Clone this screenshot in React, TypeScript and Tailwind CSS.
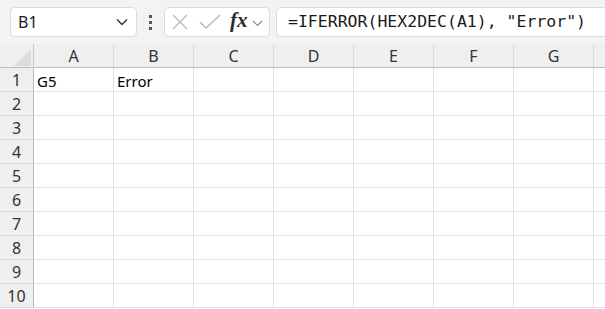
import React from "react";

const cols = ["A", "B", "C", "D", "E", "F", "G"];
const rows = [1, 2, 3, 4, 5, 6, 7, 8, 9, 10];

export default function App() {
  return (
    <div className="w-[605px] h-[309px] overflow-hidden bg-white" style={{ fontFamily: '"Noto Sans", "Open Sans", sans-serif' }}>
      {/* top bar */}
      <div className="h-[44px] bg-[#f3f3f3] flex items-start pt-[7px]">
        <div className="ml-[10px] w-[127px] h-[30px] bg-white border border-[#dcdcdc] rounded-[5px] flex items-center pl-[7px] pr-[8px]">
          <span className="text-[16px] text-[#1a1a1a] leading-none">B1</span>
          <svg className="ml-auto" width="12" height="8" viewBox="0 0 12 8">
            <path d="M1 1.5 L6 6.5 L11 1.5" fill="none" stroke="#333" strokeWidth="1.4" />
          </svg>
        </div>
        <div className="w-[27px] h-[30px] flex flex-col items-center justify-center gap-[3px]">
          <div className="w-[3px] h-[3px] bg-[#555]" />
          <div className="w-[3px] h-[3px] bg-[#555]" />
          <div className="w-[3px] h-[3px] bg-[#555]" />
        </div>
        <div className="w-[106px] h-[30px] bg-white border border-[#dcdcdc] rounded-[5px] flex items-center pl-[7px]">
          <svg width="16" height="16" viewBox="0 0 16 16">
            <path d="M1 1 L15 15 M15 1 L1 15" stroke="#b8b8b8" strokeWidth="1.3" fill="none" />
          </svg>
          <svg className="ml-[11px]" width="22" height="16" viewBox="0 0 22 16">
            <path d="M1 8 L7 14 L21 1" stroke="#b8b8b8" strokeWidth="1.3" fill="none" />
          </svg>
          <span className="ml-[9px] text-[21px] leading-none italic font-bold text-[#2b2b2b] -mt-[3px]" style={{ fontFamily: '"Liberation Serif", serif' }}>fx</span>
          <svg className="ml-[4px] mt-[2px]" width="11" height="7" viewBox="0 0 11 7">
            <path d="M1 1 L5.5 5.5 L10 1" fill="none" stroke="#8a8a8a" strokeWidth="1.2" />
          </svg>
        </div>
        <div className="ml-[6px] flex-1 h-[30px] bg-white border border-[#dcdcdc] border-r-0 rounded-l-[5px] flex items-center pl-[11px]">
          <span className="text-[16.5px] text-[#1a1a1a] leading-none whitespace-pre" style={{ fontFamily: '"DejaVu Sans Mono", monospace' }}>=IFERROR(HEX2DEC(A1), "Error")</span>
        </div>
      </div>
      {/* grid */}
      <div className="grid grid-cols-[34px_repeat(7,80px)_1fr]">
        {/* header row */}
        <div className="h-[24px] bg-[#efefef] border-r border-r-[#c8c8c8] border-b border-b-[#bdbdbd] relative">
          <svg className="absolute left-[14px] top-[5px]" width="17" height="17" viewBox="0 0 17 17">
            <path d="M17 0 L17 17 L0 17 Z" fill="#dcdcdc" />
          </svg>
        </div>
        {cols.map((c) => (
          <div key={c} className="h-[24px] bg-[#efefef] border-r border-r-[#dadada] border-b border-b-[#bdbdbd] flex items-center justify-center text-[16px] text-[#333]">
            {c}
          </div>
        ))}
        <div className="h-[24px] bg-[#efefef] border-b border-b-[#bdbdbd]" />
        {rows.map((r) => (
          <React.Fragment key={r}>
            <div className="h-[24px] bg-[#efefef] border-r border-r-[#b8b8b8] border-b border-b-[#dadada] flex items-center justify-center text-[16px] text-[#333]">
              {r}
            </div>
            {cols.map((c) => (
              <div key={c} className="h-[24px] border-r border-r-[#e1e1e1] border-b border-b-[#e1e1e1] flex items-end pb-[1px] pl-[3px] text-[15px] leading-[18px] text-black">
                {r === 1 && c === "A" ? "G5" : r === 1 && c === "B" ? "Error" : ""}
              </div>
            ))}
            <div className="h-[24px] border-b border-b-[#e1e1e1]" />
          </React.Fragment>
        ))}
      </div>
    </div>
  );
}
